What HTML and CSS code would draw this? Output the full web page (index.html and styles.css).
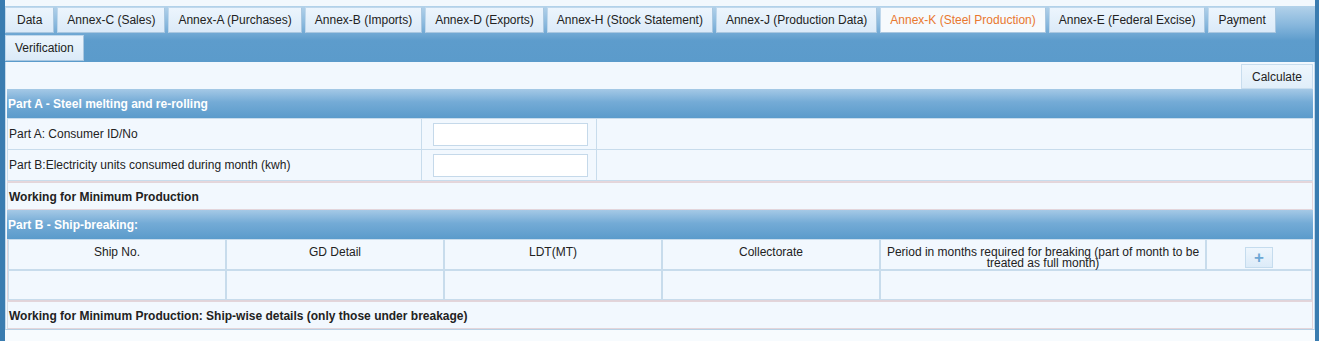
FILE: index.html
```html
<!DOCTYPE html>
<html lang="en">
<head>
  <meta charset="UTF-8" />
  <title>Annex-K (Steel Production)</title>
  <link rel="stylesheet" href="styles.css">
</head>
<body>

  <div class="wrap">
    <div class="top-strip"></div>

    <div class="tabs-band">
      <ul class="tabs">
        <li class="tab">Data</li>
        <li class="tab">Annex-C (Sales)</li>
        <li class="tab">Annex-A (Purchases)</li>
        <li class="tab">Annex-B (Imports)</li>
        <li class="tab">Annex-D (Exports)</li>
        <li class="tab">Annex-H (Stock Statement)</li>
        <li class="tab">Annex-J (Production Data)</li>
        <li class="tab active">Annex-K (Steel Production)</li>
        <li class="tab">Annex-E (Federal Excise)</li>
        <li class="tab">Payment</li>
        <li class="tab">Verification</li>
      </ul>
    </div>

    <div class="panel">
      <div class="toolbar">
        <button class="btn">Calculate</button>
      </div>

      <div class="section-head">Part A - Steel melting and re-rolling</div>

      <table class="form">
        <colgroup>
          <col class="c-lbl">
          <col class="c-inp">
          <col>
        </colgroup>
        <tr>
          <td class="lbl">Part A: Consumer ID/No</td>
          <td class="inp"><input type="text"></td>
          <td></td>
        </tr>
        <tr>
          <td class="lbl">Part B:Electricity units consumed during month (kwh)</td>
          <td class="inp"><input type="text"></td>
          <td></td>
        </tr>
      </table>

      <div class="note">Working for Minimum Production</div>

      <div class="section-head">Part B - Ship-breaking:</div>

      <table class="grid">
        <colgroup>
          <col class="g1">
          <col class="g1">
          <col class="g1">
          <col class="g1">
          <col class="g5">
          <col>
        </colgroup>
        <tr>
          <th>Ship No.</th>
          <th>GD Detail</th>
          <th>LDT(MT)</th>
          <th>Collectorate</th>
          <th>Period in months required for breaking (part of month to be treated as full month)</th>
          <th><button class="add">+</button></th>
        </tr>
        <tr class="empty">
          <td></td>
          <td></td>
          <td></td>
          <td></td>
          <td colspan="2"></td>
        </tr>
      </table>

      <div class="note">Working for Minimum Production: Ship-wise details (only those under breakage)</div>
    </div>
  </div>

</body>
</html>
```

FILE: styles.css
```css
body {
  margin: 0;
  font-family: "Liberation Sans", Arial, sans-serif;
  font-size: 12px;
  color: #222;
  background: #f7fbfe;
}

.wrap {
  border-left: 5px solid #3a7cb0;
  border-right: 4px solid #3a7cb0;
  min-height: 341px;
  box-sizing: border-box;
}

.top-strip {
  height: 6px;
  background: #f2f8fd;
}

/* tab header */
.tabs-band {
  background: linear-gradient(to bottom, #b3d2ea 0%, #86b6dc 35%, #5d9ccc 62%, #5b9bcb 100%);
  padding: 1px 0 1px 0;
}

.tabs {
  list-style: none;
  margin: 0;
  padding: 0;
  display: flex;
  flex-wrap: wrap;
  gap: 2px 3px;
}

.tab {
  height: 24px;
  line-height: 25px;
  padding: 0 9px;
  background: linear-gradient(to bottom, #ecf5fd, #dbeaf8);
  border: 1px solid #c0d8ec;
  border-right-color: #a9c7e0;
  border-bottom-color: #a9c7e0;
  cursor: pointer;
  white-space: nowrap;
}

.tab:first-child {
  padding: 0 11px;
}

.tab.active {
  background: #f6fafd;
  color: #e9782f;
}

/* content */
.panel {
  background: #f2f8fe;
  border: 1px solid #c3d8ea;
  border-top: none;
  padding: 1px 1px 0 1px;
  border-bottom: 1px solid #b9d1e5;
}

.toolbar {
  display: flex;
  justify-content: flex-end;
  padding-top: 1px;
}

.btn {
  font-family: inherit;
  font-size: 12px;
  color: #222;
  height: 25px;
  padding: 0 10px;
  background: linear-gradient(to bottom, #eef6fd, #e0eef9);
  border: 1px solid #c8ddee;
  cursor: pointer;
}

.section-head {
  height: 29px;
  line-height: 30px;
  padding-left: 1px;
  color: #fff;
  font-weight: bold;
  background: linear-gradient(to bottom, #a5c9e6 0%, #74abd6 45%, #5b9bcb 100%);
}

table {
  width: 100%;
  border-spacing: 0;
  table-layout: fixed;
}

.form td {
  height: 30px;
  padding: 0 1px;
  border: 1px solid #c8dcec;
  border-top: none;
  border-left: none;
}

.form tr:first-child td {
  border-top: 1px solid #c8dcec;
}

.form td:last-child {
  border-right: 1px solid #d2e1ee;
}

.form .lbl {
  border-left: 1px solid #c8dcec;
}

.c-lbl { width: 415px; }
.c-inp { width: 175px; }

.form input {
  width: 155px;
  height: 23px;
  box-sizing: border-box;
  margin-left: 10px;
  border: 1px solid #c5d9ea;
  background: #fff;
  display: block;
}

.form {
  border-bottom: 1px solid #e6d7dc;
}

.note {
  height: 26px;
  line-height: 29px;
  padding-left: 1px;
  font-weight: bold;
  border: 1px solid #e3d5da;
  border-left-color: #d6dde6;
}

.grid {
  border: 1px solid #e1d4da;
  border-top: none;
}

.g1 { width: 218px; }
.g5 { width: 326px; }

.grid th,
.grid td {
  border: 1px solid #c8dcec;
  box-sizing: border-box;
}

.grid th {
  height: 30px;
  padding: 7px 2px 0;
  font-weight: normal;
  line-height: 11px;
  vertical-align: top;
  text-align: center;
}

.grid .empty td {
  height: 30px;
}

.add {
  width: 28px;
  height: 21px;
  padding: 0;
  margin: 0 auto;
  display: block;
  font-family: inherit;
  font-size: 17px;
  font-weight: bold;
  line-height: 19px;
  color: #6ea8d5;
  background: linear-gradient(to bottom, #eef6fd, #dcebf8);
  border: 1px solid #c5dcee;
  cursor: pointer;
}
```
